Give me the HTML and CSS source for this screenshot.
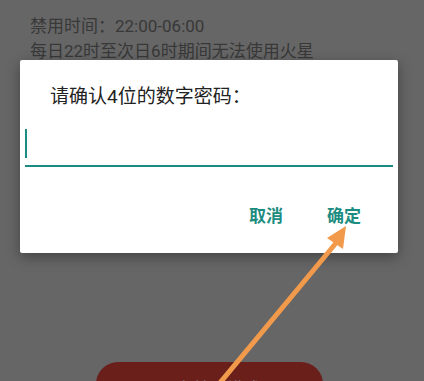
FILE: index.html
```html
<!DOCTYPE html>
<html lang="zh">
<head>
<meta charset="utf-8">
<link rel="stylesheet" href="styles.css">
</head>
<body>
<div class="screen">
  <div class="info">
    <div class="line">禁用时间：22:00-06:00</div>
    <div class="line">每日22时至次日6时期间无法使用火星</div>
  </div>
  <div class="bottom">
    <div class="action">开启禁用模式</div>
  </div>
</div>
<div class="dialog">
  <div class="title">请确认4位的数字密码：</div>
  <div class="field"><span class="caret"></span></div>
  <div class="buttons">
    <span class="btn">取消</span>
    <span class="btn">确定</span>
  </div>
</div>
<svg class="arrow" width="424" height="381" viewBox="0 0 424 381">
  <line x1="219" y1="384" x2="336" y2="243" stroke="#f29a4b" stroke-width="5" stroke-linecap="round"/>
  <polygon points="346,226 327,238 343,249" fill="#f29a4b"/>
</svg>
</body>
</html>
```
FILE: styles.css
```css
html, body {
  margin: 0;
  padding: 0;
  width: 424px;
  height: 381px;
  overflow: hidden;
  background: #666666;
  font-family: "Roboto", "Noto Sans CJK SC", sans-serif;
}
.screen {
  width: 424px;
  height: 381px;
  display: flex;
  flex-direction: column;
}
.info {
  padding: 14px 0 0 30px;
  color: #383838;
  font-size: 17px;
  line-height: 25px;
}
.bottom {
  margin-top: auto;
  padding-left: 96px;
  height: 19px;
}
.action {
  width: 227px;
  height: 44px;
  border-radius: 22px;
  background: #6a1f1b;
  color: #8f7977;
  font-size: 17px;
  text-align: center;
  line-height: 44px;
  padding-top: 5px;
  box-sizing: border-box;
}
.dialog {
  position: absolute;
  left: 20px;
  top: 60px;
  width: 378px;
  height: 193px;
  background: #ffffff;
  border-radius: 2px;
  box-shadow: 0 4px 14px rgba(0,0,0,0.35);
  box-sizing: border-box;
}
.title {
  padding: 23px 0 0 30px;
  font-size: 19px;
  line-height: 27px;
  color: #222222;
}
.field {
  margin: 18px 5px 0 5px;
  height: 37px;
  border-bottom: 2px solid #1d8c80;
  position: relative;
}
.caret {
  position: absolute;
  left: 0;
  top: 1px;
  width: 2px;
  height: 29px;
  background: #1d8c80;
}
.buttons {
  display: flex;
  justify-content: flex-end;
  gap: 44px;
  padding: 37px 37px 0 0;
}
.btn {
  color: #1d8c80;
  font-size: 17px;
  font-weight: bold;
  line-height: 24px;
}
.arrow {
  position: absolute;
  left: 0;
  top: 0;
}
```
